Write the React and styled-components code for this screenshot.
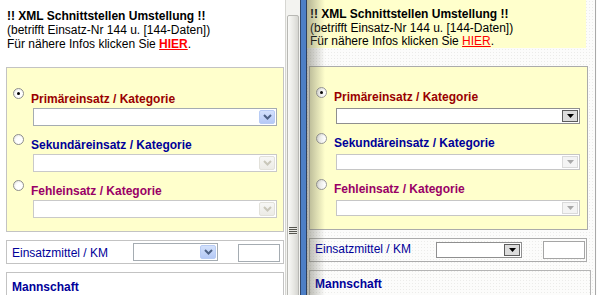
import React from 'react';
import styled, { createGlobalStyle } from 'styled-components';

const GlobalStyle = createGlobalStyle`
  html, body { margin: 0; padding: 0; background: #fff; }
  body {
    font-family: "Liberation Sans", Arial, sans-serif;
    font-size: 12px;
    color: #000;
  }
  * { box-sizing: border-box; }
`;

const Frame = styled.div`
  display: flex;
  width: 597px;
  height: 295px;
  overflow: hidden;
`;

const Pane = styled.div`
  position: relative;
  flex: none;
  width: ${({ $width }) => $width}px;
  height: 100%;
  overflow: hidden;
  padding-left: ${({ $classic }) => ($classic ? 3 : 0)}px;
  background-color: ${({ $classic }) => ($classic ? '#fcfcfb' : '#fff')};
  background-image: ${({ $classic }) =>
    $classic ? 'radial-gradient(#ececea 0.6px, transparent 0.8px)' : 'none'};
  background-size: 3px 3px;

  &::after {
    content: '';
    display: ${({ $classic }) => ($classic ? 'block' : 'none')};
    position: absolute;
    top: 0;
    bottom: 0;
    left: 295px;
    width: 1px;
    background: #a9a9a9;
  }
`;

/* splitter bar with its shadow, lies over the left edge of the right pane */
const Splitter = styled.div`
  position: absolute;
  top: 0;
  bottom: 0;
  left: 0;
  width: 7px;
  background: #4d7fc6;
  border-left: 1px solid #30466b;
  border-right: 1px solid #2d3f5e;
  z-index: 2;

  &::after {
    content: '';
    position: absolute;
    top: 0;
    bottom: 0;
    left: 6px;
    width: 18px;
    background: linear-gradient(to right, rgba(105, 105, 90, 0.5), rgba(110, 110, 95, 0));
  }
`;

const Scrollbar = styled.div`
  flex: none;
  width: 15px;
  height: 100%;
  padding: 15px 1px 0 1px;
  background: #f3f3f0;
  border-left: 1px solid #d6d6d2;
`;

const Thumb = styled.div`
  display: flex;
  flex-direction: column;
  align-items: center;
  height: 320px;
  border: 1px solid #b8b8b4;
  border-radius: 2px 2px 0 0;
  background: linear-gradient(to right, #fafaf8, #e6e6e2 60%, #d6d6d2);
`;

const Grip = styled.div`
  margin-top: 211px;
  width: 8px;
  height: 8px;
  background: repeating-linear-gradient(to bottom, #55554f 0 1px, #e8e8e4 1px 2px);
`;

const Notice = styled.div`
  width: ${({ $classic }) => ($classic ? 283 : 282)}px;
  height: ${({ $classic }) => ($classic ? 48 : 51)}px;
  padding: ${({ $classic }) => ($classic ? '8px 0 0 7px' : '9px 0 0 7px')};
  line-height: ${({ $classic }) => ($classic ? 13.5 : 14)}px;
  background: ${({ $classic }) => ($classic ? '#ffffcc' : 'transparent')};
  white-space: nowrap;

  b { font-weight: bold; }
`;

const HierLink = styled.a`
  color: #ff0000;
  font-weight: ${({ $classic }) => ($classic ? 'normal' : 'bold')};
  text-decoration: underline;
  cursor: pointer;
`;

const CategoryBox = styled.div`
  width: ${({ $classic }) => ($classic ? 279 : 278)}px;
  margin: ${({ $classic }) => ($classic ? '18px 0 0 6px' : '16px 0 0 6px')};
  padding: ${({ $classic }) => ($classic ? '20px 0 4px' : '20px 0 5px')};
  background: #ffffcc;
  border: 1px solid ${({ $classic }) => ($classic ? '#ababab' : '#c3c3c3')};
`;

const OptionBlock = styled.div`
  display: flex;
  flex-direction: column;
  margin-bottom: ${({ $classic }) => ($classic ? 9 : 8)}px;
`;

const OptionHead = styled.div`
  display: flex;
  align-items: flex-start;
  height: ${({ $classic }) => ($classic ? 21 : 20)}px;
  padding-left: 6px;
`;

const Radio = styled.span`
  flex: none;
  position: relative;
  width: 11px;
  height: 11px;
  border-radius: 50%;
  border: 1px solid ${({ $classic }) => ($classic ? '#9a9a9a' : '#8e8e8e')};
  background: radial-gradient(circle at 60% 60%, #ffffff 40%, #dcdcd8 100%);

  &::after {
    content: '';
    display: ${({ $checked }) => ($checked ? 'block' : 'none')};
    position: absolute;
    left: 3px;
    top: 3px;
    width: 3px;
    height: 3px;
    border-radius: 50%;
    background: #000;
  }
`;

const OptionLabel = styled.span`
  margin-left: 7px;
  padding-top: ${({ $classic }) => ($classic ? 3 : 4)}px;
  line-height: 14px;
  font-weight: bold;
  color: ${({ $color }) => $color};
  white-space: nowrap;
`;

const Dropdown = styled.div`
  display: flex;
  justify-content: flex-end;
  width: ${({ $width }) => $width}px;
  height: ${({ $classic }) => ($classic ? 16 : 18)}px;
  margin-left: ${({ $indent }) => $indent}px;
  padding: 1px;
  background: #fff;
  border: 1px solid
    ${({ $classic, $disabled }) =>
      $classic ? ($disabled ? '#c6c6c6' : '#8f8f8f') : $disabled ? '#c9c9c9' : '#a5acb2'};
`;

const DropButton = styled.span`
  display: flex;
  align-items: center;
  justify-content: center;
  width: 16px;
  height: 100%;
  border-radius: ${({ $classic }) => ($classic ? 0 : 2)}px;
  background: ${({ $classic, $disabled }) =>
    $classic
      ? $disabled
        ? '#f4f4f4'
        : '#dcdcdc'
      : $disabled
      ? 'linear-gradient(#f7f7f5, #ecebe6)'
      : 'linear-gradient(#d3e1fc, #b5c9f6)'};
  border: 1px solid
    ${({ $classic, $disabled }) =>
      $classic ? ($disabled ? '#dadada' : '#5c5c5c') : $disabled ? '#e2e1da' : '#b8ccf5'};
`;

const ChevronXP = ({ disabled }) => (
  <svg width="9" height="6" viewBox="0 0 9 6">
    <path
      d="M1 1 L4.5 4.5 L8 1"
      fill="none"
      stroke={disabled ? '#c9c7ba' : '#4d6185'}
      strokeWidth="2"
    />
  </svg>
);

const TriangleClassic = ({ disabled }) => (
  <svg width="7" height="4" viewBox="0 0 7 4">
    <polygon points="0,0 7,0 3.5,4" fill={disabled ? '#a8a8a8' : '#000'} />
  </svg>
);

const Select = ({ classic, disabled, width, indent = 0 }) => (
  <Dropdown $classic={classic} $disabled={disabled} $width={width} $indent={indent}>
    <DropButton $classic={classic} $disabled={disabled}>
      {classic ? <TriangleClassic disabled={disabled} /> : <ChevronXP disabled={disabled} />}
    </DropButton>
  </Dropdown>
);

const UnitRow = styled.div`
  display: flex;
  align-items: flex-start;
  width: 278px;
  height: 24px;
  margin: 8px 0 0 6px;
  padding: ${({ $classic }) => ($classic ? '3px 0 0 5px' : '2px 0 0 5px')};
  border: 1px solid ${({ $classic }) => ($classic ? '#ababab' : '#c3c3c3')};
  background: ${({ $classic }) => ($classic ? 'transparent' : '#fff')};
`;

const RowLabel = styled.span`
  flex: none;
  width: 121px;
  padding-top: ${({ $classic }) => ($classic ? 0 : 3)}px;
  line-height: 14px;
  color: #000099;
  white-space: nowrap;
`;

const SmallInput = styled.span`
  flex: none;
  width: 42px;
  height: 18px;
  margin: ${({ $classic }) => ($classic ? '-1px 0 0 21px' : '1px 0 0 20px')};
  background: #fff;
  border: 1px solid ${({ $classic }) => ($classic ? '#a5a5a5' : '#a5acb2')};
`;

const CrewBox = styled.div`
  width: ${({ $classic }) => ($classic ? 282 : 278)}px;
  height: 40px;
  margin: 8px 0 0 6px;
  padding: ${({ $classic }) => ($classic ? '6px 0 0 5px' : '7px 0 0 5px')};
  border: 1px solid ${({ $classic }) => ($classic ? '#b5b5b5' : '#c3c3c3')};
  background: ${({ $classic }) => ($classic ? 'transparent' : '#fff')};
`;

const CrewTitle = styled.span`
  line-height: 14px;
  font-weight: bold;
  color: #000099;
`;

const options = [
  { label: 'Primäreinsatz / Kategorie', color: '#990000', checked: true, disabled: false },
  { label: 'Sekundäreinsatz / Kategorie', color: '#000099', checked: false, disabled: true },
  { label: 'Fehleinsatz / Kategorie', color: '#990066', checked: false, disabled: true },
];

const Panel = ({ classic }) => (
  <>
    <Notice $classic={classic}>
      <b>!! XML Schnittstellen Umstellung !!</b>
      <br />
      (betrifft Einsatz-Nr 144 u. [144-Daten])
      <br />
      Für nähere Infos klicken Sie <HierLink $classic={classic}>HIER</HierLink>.
    </Notice>

    <CategoryBox $classic={classic}>
      {options.map((o) => (
        <OptionBlock key={o.label} $classic={classic}>
          <OptionHead $classic={classic}>
            <Radio $checked={o.checked} $classic={classic} />
            <OptionLabel $color={o.color} $classic={classic}>
              {o.label}
            </OptionLabel>
          </OptionHead>
          <Select classic={classic} disabled={o.disabled} width={244} indent={26} />
        </OptionBlock>
      ))}
    </CategoryBox>

    <UnitRow $classic={classic}>
      <RowLabel $classic={classic}>Einsatzmittel / KM</RowLabel>
      <Select classic={classic} width={classic ? 86 : 85} />
      <SmallInput $classic={classic} />
    </UnitRow>

    <CrewBox $classic={classic}>
      <CrewTitle>Mannschaft</CrewTitle>
    </CrewBox>
  </>
);

export default function App() {
  return (
    <>
      <GlobalStyle />
      <Frame>
        <Pane $width={285}>
          <Panel />
        </Pane>
        <Scrollbar>
          <Thumb>
            <Grip />
          </Thumb>
        </Scrollbar>
        <Pane $width={297} $classic>
          <Splitter />
          <Panel classic />
        </Pane>
      </Frame>
    </>
  );
}
